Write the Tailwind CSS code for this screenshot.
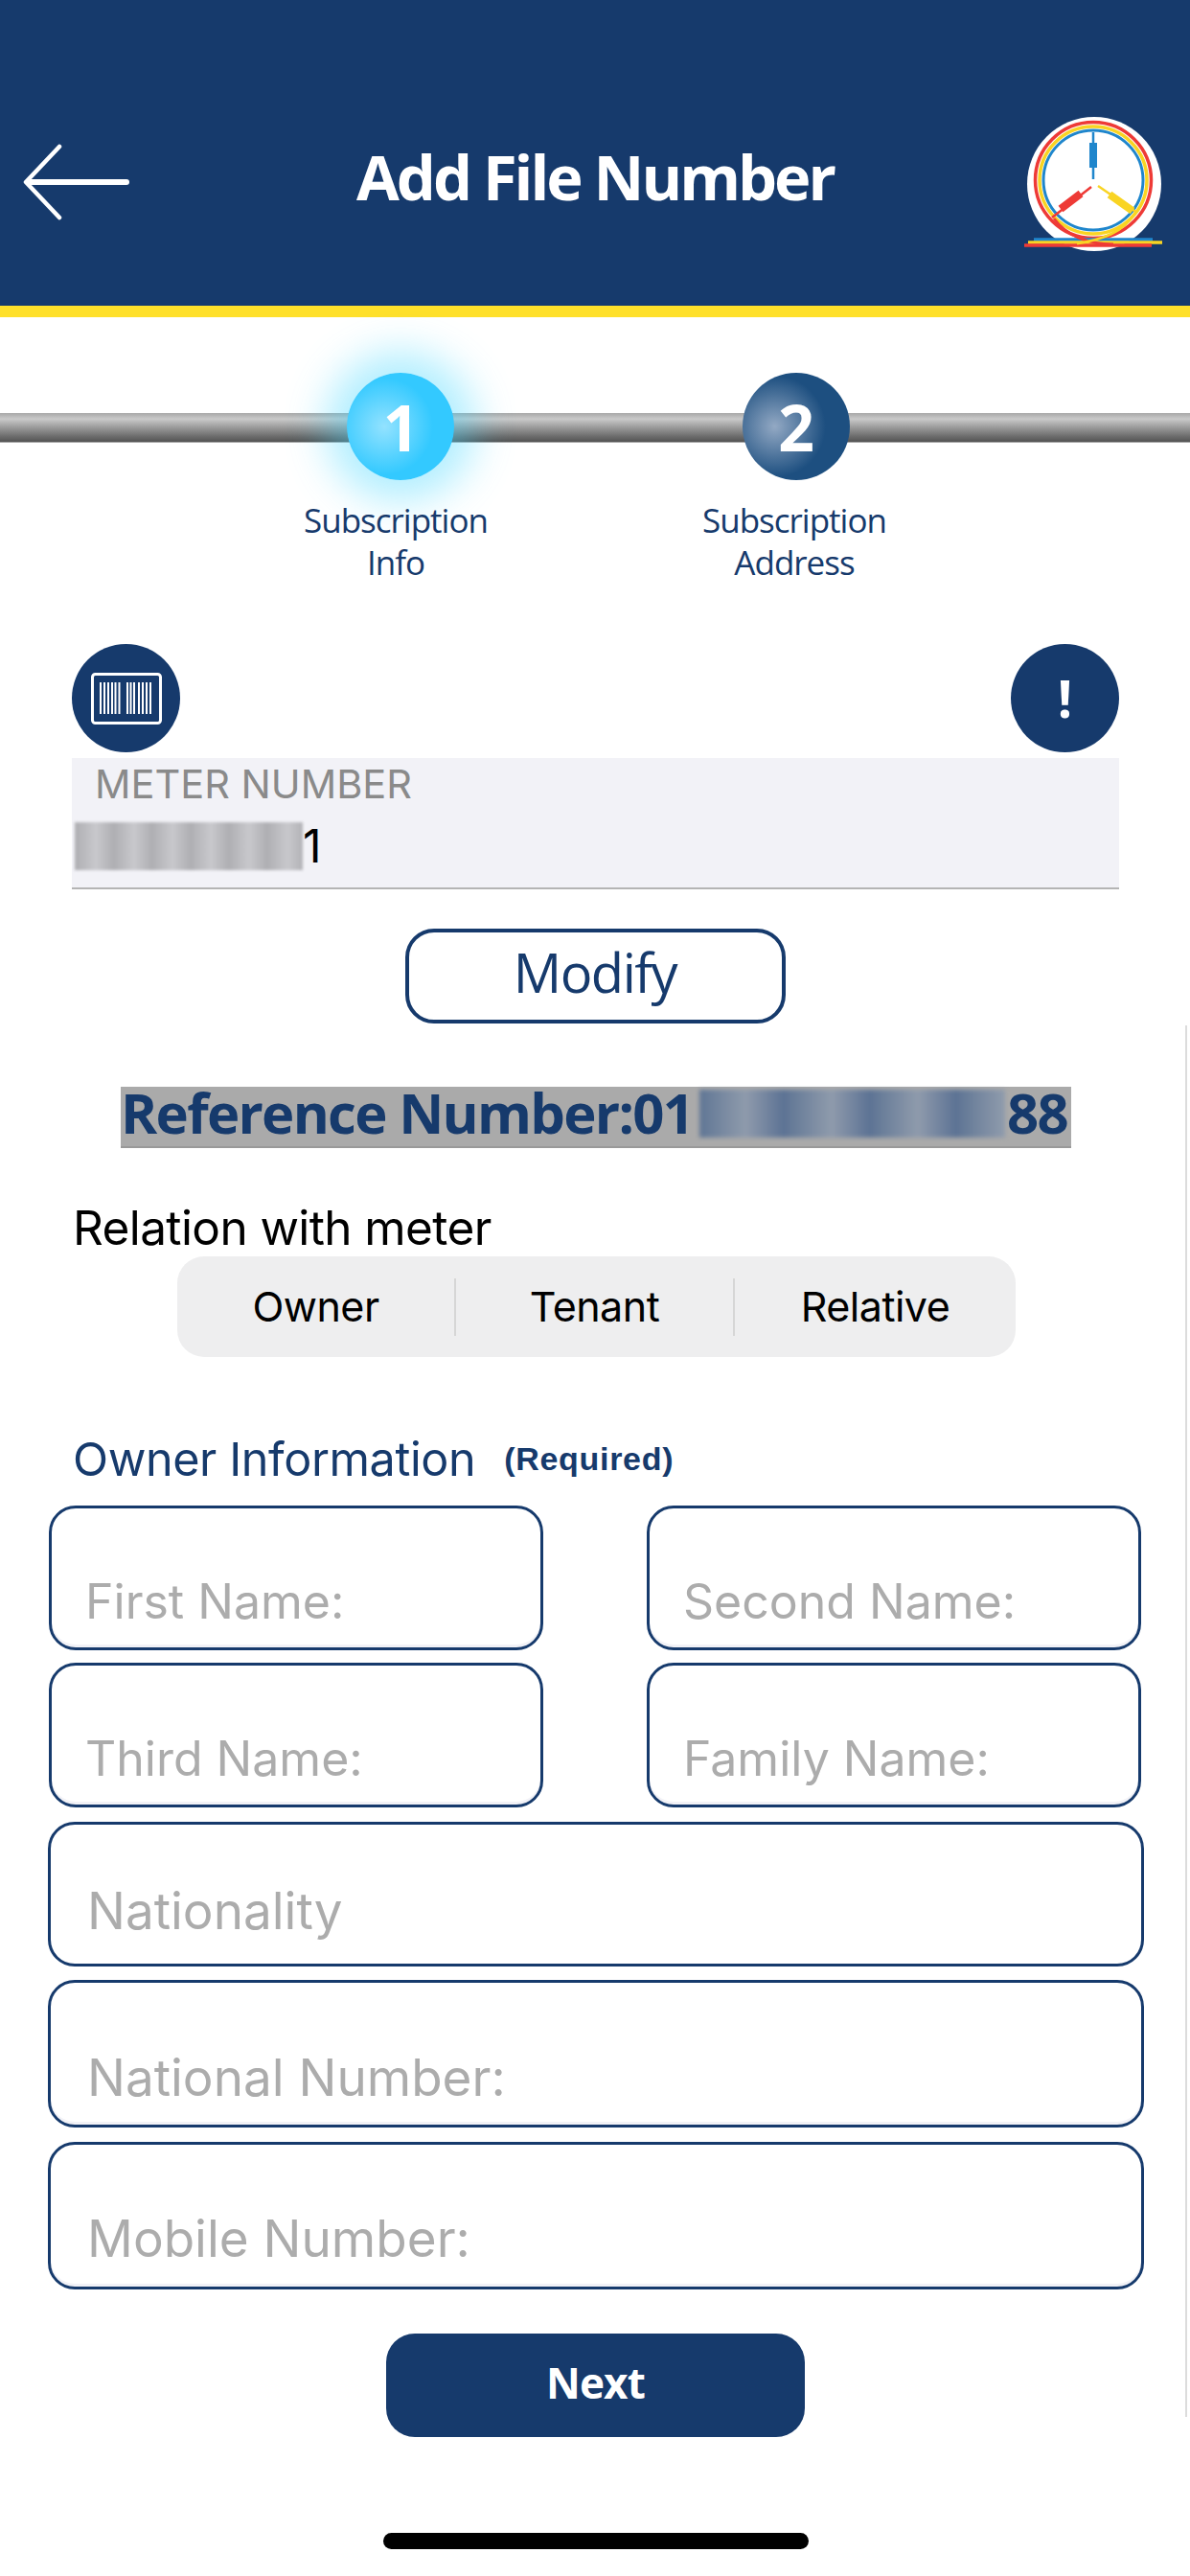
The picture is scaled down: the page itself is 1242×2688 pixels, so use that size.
<!DOCTYPE html>
<html>
<head>
<meta charset="utf-8">
<script src="https://cdn.jsdelivr.net/npm/@tailwindcss/browser@4"></script>
</head>
<body class="m-0">
<div class="relative w-[1242px] h-[2688px] overflow-hidden bg-white font-['Open_Sans',sans-serif]">
  <!-- header -->
  <header class="h-[331px] bg-[#163a6c] border-b-[12px] border-[#ffe02a] pt-[100px]">
    <div class="grid grid-cols-[1fr_auto_1fr] items-center h-[180px]">
      <svg class="ml-[24px] w-[112px] h-[80px]" viewBox="0 0 112 80" fill="none" stroke="#fff" stroke-linecap="round" stroke-linejoin="round"><path d="M108 40H6" stroke-width="6"/><path d="M38 3 3 40l35 37" stroke-width="4.5"/></svg>
      <h1 class="text-[65px] leading-[80px] font-bold text-white tracking-[-3px] mb-[12px]">Add File Number</h1>
      <svg class="justify-self-end w-[202px] h-[180px]" viewBox="0 0 202 180" fill="none">
        <circle cx="102" cy="92" r="70" fill="#fff"/>
        <circle cx="101" cy="88" r="60.5" stroke="#ee3a36" stroke-width="3.5"/>
        <circle cx="101" cy="88" r="56" stroke="#f9d423" stroke-width="3.5"/>
        <circle cx="101" cy="88" r="52" stroke="#1f86cc" stroke-width="3"/>
        <path d="M39 150H163" stroke="#1f86cc" stroke-width="3.5"/>
        <path d="M33 153H173" stroke="#f9d423" stroke-width="3.5"/>
        <path d="M29 156H162" stroke="#ee3a36" stroke-width="3.5"/>
        <path d="M60 128C72 145 95 155 122 155" stroke="#ee3a36" stroke-width="3"/>
        <path d="M145 122C132 142 112 150 84 154" stroke="#f9d423" stroke-width="3"/>
        <path d="M101 38V87" stroke="#1f86cc" stroke-width="2.5"/>
        <path d="M101 49V75" stroke="#1f86cc" stroke-width="8"/>
        <path d="M99 95 58 127" stroke="#ee3a36" stroke-width="2.5"/>
        <path d="M88 102 67 118" stroke="#ee3a36" stroke-width="8"/>
        <path d="M106 94 147 122" stroke="#f9d423" stroke-width="2.5"/>
        <path d="M118 103 142 120" stroke="#f9d423" stroke-width="8"/>
      </svg>
    </div>
  </header>

  <!-- stepper -->
  <section class="relative h-[278px] pt-[58px]">
    <div class="absolute left-0 right-0 top-[100px] h-[31px] bg-[linear-gradient(180deg,#a8a8a8_0%,#c9c9c9_20%,#a0a0a0_45%,#6a6a6a_80%,#555_96%,#ddd_100%)]"></div>
    <div class="relative flex pl-[268px] gap-[113px]">
      <div class="w-[300px] flex flex-col items-center">
        <div class="w-[112px] h-[112px] rounded-full flex items-center justify-center text-[66px] font-bold text-white tracking-[-1px] bg-[radial-gradient(circle_at_35%_50%,#93e2ff_0%,#33c9ff_55%)] shadow-[0_0_42px_22px_rgba(70,215,255,0.42)]">1</div>
        <p class="mt-[20px] -translate-x-[5px] text-center text-[35px] leading-[44px] text-[#163a6c] tracking-[-1px]">Subscription<br>Info</p>
      </div>
      <div class="w-[300px] flex flex-col items-center">
        <div class="w-[112px] h-[112px] rounded-full flex items-center justify-center text-[66px] font-bold text-white bg-[radial-gradient(circle_at_30%_50%,#93a9c4_0%,#1d4f80_55%)]">2</div>
        <p class="mt-[20px] -translate-x-[2px] text-center text-[35px] leading-[44px] text-[#163a6c] tracking-[-1px]">Subscription<br>Address</p>
      </div>
    </div>
  </section>

  <!-- main form -->
  <main>
    <div class="mt-[63px] pl-[75px] pr-[74px] flex justify-between">
      <div class="w-[113px] h-[113px] rounded-full bg-[#163a6c] flex items-center justify-center">
        <svg class="w-[74px] h-[54px]" viewBox="0 0 74 54" fill="none">
          <rect x="1.5" y="1.5" width="71" height="51" rx="3" stroke="#fff" stroke-width="3"/>
          <g stroke="#fff" stroke-width="2">
            <path d="M10 10V43M14 10V43M18 10V43M22 10V43M25.5 10V43M29.5 10V43"/>
            <path d="M38 10V43M41.5 10V43M45 10V43M50 10V43M54 10V43M58 10V43M62 10V43"/>
          </g>
        </svg>
      </div>
      <div class="w-[113px] h-[113px] rounded-full bg-[#163a6c] flex items-center justify-center text-[54px] font-bold text-white">!</div>
    </div>

    <div class="mt-[6px] ml-[75px] mr-[74px] h-[137px] bg-[#f2f2f7] border-b-2 border-[#b4b4b4]">
      <div class="pl-[24px] pt-[5px] h-[60px] font-['Inter',sans-serif] text-[41.5px] leading-[44px] text-[#8a8a8a]">METER NUMBER</div>
      <div class="flex items-center h-[58px] pt-[6px]">
        <div class="ml-[3px] w-[238px] h-[50px] blur-[1.5px] bg-[#c4c4c8] bg-[repeating-linear-gradient(90deg,#aeaeb2_0px,#c8c8cc_22px,#b0b0b4_40px)]"></div>
        <span class="font-['Inter',sans-serif] text-[48px] leading-[58px] text-black">1</span>
      </div>
    </div>

    <button class="block mt-[41px] mx-auto w-[397px] h-[99px] rounded-[30px] border-[4px] border-[#163a6c] text-[56px] leading-[70px] pb-[10px] text-[#163a6c] tracking-[-1.5px]">Modify</button>

    <div class="mt-[66px] ml-[126px] w-[992px] h-[64px] bg-[#aaaaaa] border-b-2 border-[#999] flex items-center text-[58px] font-bold text-[#163a6c] tracking-[-1.7px] whitespace-nowrap leading-[64px]">
      <span class="w-[604px] shrink-0 -translate-y-[4px]">Reference Number:01</span>
      <span class="w-[319px] h-[50px] shrink-0 blur-[2px] -translate-y-[3px] bg-[#8c97a8] bg-[repeating-linear-gradient(90deg,#607695_0px,#8f9bac_48px,#5a7193_90px)]"></span>
      <span class="pl-[2px] -translate-y-[4px]">88</span>
    </div>

    <div class="mt-[54px] ml-[76px] h-[59px] font-['Inter',sans-serif] text-[49.5px] leading-[59px] text-black tracking-[-0.6px]">Relation with meter</div>

    <div class="ml-[185px] w-[875px] h-[105px] rounded-[28px] bg-[#eeeeef] flex items-center font-['Inter',sans-serif] text-[43px] text-black tracking-[-0.5px]">
      <div class="w-[291px] h-[60px] flex items-center justify-center border-r-2 border-[#d6d6d6]">Owner</div>
      <div class="w-[291px] h-[60px] flex items-center justify-center border-r-2 border-[#d6d6d6]">Tenant</div>
      <div class="flex-1 h-[60px] flex items-center justify-center">Relative</div>
    </div>

    <div class="mt-[77px] ml-[76px] h-[60px] flex items-center text-[#163a6c]">
      <span class="font-['Inter',sans-serif] text-[48.5px] tracking-[-0.4px]">Owner Information</span>
      <span class="ml-[30px] mt-[-2px] font-['Liberation_Sans',sans-serif] font-bold text-[34px] tracking-[0.7px]">(Required)</span>
    </div>

    <div class="mt-[18px] ml-[51px] w-[1140px] grid grid-cols-2 gap-x-[108px] gap-y-[13px] font-['Inter',sans-serif] text-[50px] leading-[60px] text-[#acacac]">
      <div class="h-[151px] rounded-[28px] border-[3px] border-[#163a6c] flex items-end pl-[35px] pb-[18px] shadow-[inset_0_-3px_0_#f2f2f7]">First Name:</div>
      <div class="h-[151px] rounded-[28px] border-[3px] border-[#163a6c] flex items-end pl-[35px] pb-[18px] shadow-[inset_0_-3px_0_#f2f2f7]">Second Name:</div>
      <div class="h-[151px] rounded-[28px] border-[3px] border-[#163a6c] flex items-end pl-[35px] pb-[18px] shadow-[inset_0_-3px_0_#f2f2f7]">Third Name:</div>
      <div class="h-[151px] rounded-[28px] border-[3px] border-[#163a6c] flex items-end pl-[35px] pb-[18px] shadow-[inset_0_-3px_0_#f2f2f7]">Family Name:</div>
    </div>

    <div class="mt-[15px] ml-[50px] w-[1144px] flex flex-col font-['Inter',sans-serif] text-[53px] leading-[60px] text-[#acacac]">
      <div class="h-[151px] rounded-[28px] border-[3px] border-[#163a6c] flex items-end pl-[38px] pb-[25px]">Nationality</div>
      <div class="mt-[14px] h-[154px] rounded-[28px] border-[3px] border-[#163a6c] flex items-end pl-[38px] pb-[19px] shadow-[inset_0_-3px_0_#f2f2f7]">National Number:</div>
      <div class="mt-[15px] h-[154px] rounded-[28px] border-[3px] border-[#163a6c] flex items-end pl-[38px] pb-[20px] shadow-[inset_0_-3px_0_#f2f2f7]">Mobile Number:</div>
    </div>

    <button class="block mt-[46px] ml-[403px] w-[437px] h-[108px] rounded-[30px] bg-[#163a6c] text-white text-[44px] leading-[60px] pb-[6px] font-bold tracking-[-0.8px]">Next</button>

    <div class="mt-[100px] ml-[400px] w-[444px] h-[17px] rounded-full bg-black"></div>
  </main>

  <!-- scroll indicator -->
  <div class="absolute left-[1237px] top-[1070px] w-[2px] h-[1452px] bg-[#dcdcdc]"></div>
</div>
</body>
</html>
